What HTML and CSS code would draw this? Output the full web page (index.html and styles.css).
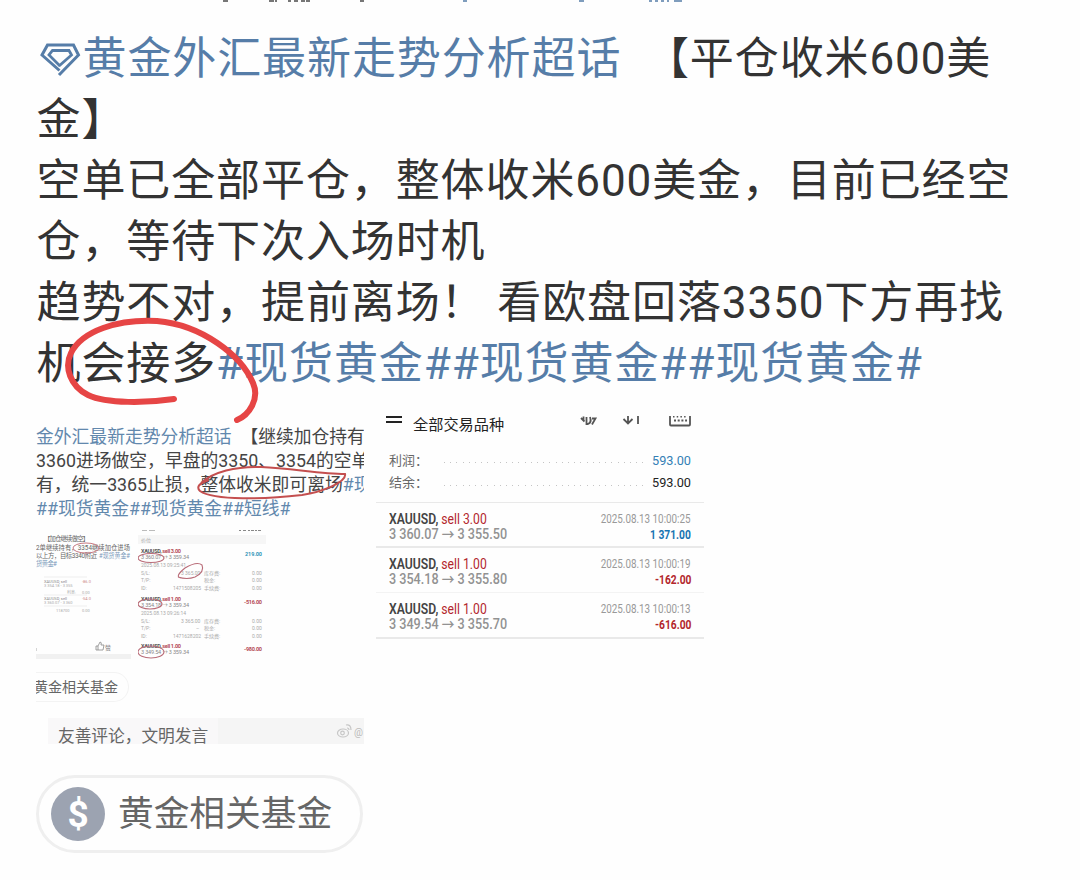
FILE: index.html
```
<!DOCTYPE html>
<html lang="zh-CN">
  <head>
    <meta charset="utf-8">
    <title>黄金外汇最新走势分析超话</title>
    <link rel="stylesheet" href="styles.css">
  </head>
  <body>
    <div class="post">
      <svg class="cut-line" width="1080" height="3" viewBox="0 0 1080 3">
        <path d="M223 1h5M269 1h5M275 1h2M288 1h3M294 1h4M301 1h4M306 1h4M360 1h4" stroke="#777" stroke-width="2"/>
        <path d="M463 1h4M579 1h5M649 1h3M655 1h3M661 1h3M667 1h2M674 1h8" stroke="#7f9dbd" stroke-width="2"/>
      </svg>
      <div class="text">
        <div><a class="topic"><svg class="gem" width="46" height="36" viewBox="0 0 46 36"><path d="M22.500 29.500L5 14L10.500 4H36.500L41.500 14L22 34" fill="none" stroke="#567da8" stroke-width="3"/><path d="M23 25L12 14L15.500 9.500H32L34.500 14L22 25" fill="none" stroke="#567da8" stroke-width="2.800"/></svg>黄金外汇最新走势分析超话</a>&nbsp; 【平仓收米600美</div>
        <div>金】</div>
        <div>空单已全部平仓，整体收米600美金，目前已经空</div>
        <div>仓，等待下次入场时机</div>
        <div>趋势不对，提前离场！ 看欧盘回落3350下方再找</div>
        <div>机会接多<a>#现货黄金##现货黄金##现货黄金#</a></div>
        <svg class="circle-mark" width="210" height="120" viewBox="0 0 210 120">
          <path d="M112 84C85 88 45 89 26 80C8 71 2 52 9 38C20 16 55 4 95 6C140 10 179 40 191 68C198 84 187 100 175 105" fill="none" stroke="#e64545" stroke-width="6" stroke-linecap="round"/>
        </svg>
      </div>

      <div class="pictures">
        <div class="picture old-post">
          <div class="old-text">
            <div><a>金外汇最新走势分析超话</a>&nbsp; 【继续加仓持有</div>
            <div>3360进场做空，早盘的3350、3354的空单</div>
            <div>有，统一3365止损，整体收米即可离场<a>#现</a></div>
            <div><a>##现货黄金##现货黄金##短线#</a></div>
            <svg class="oval-mark" width="156" height="42" viewBox="0 0 156 42">
              <path d="M5 20C17 9 40 3 65 4C95 5 124 11 149 11C151 19 126 29 106 32C70 36 18 38 4 28Q-2 22 13 17" fill="none" stroke="#c44f4f" stroke-width="2"/>
            </svg>
          </div>
          <div class="old-pictures">
            <svg class="tiny" width="95" height="130" viewBox="0 0 95 130">
              <g font-size="6.300" fill="#666">
                <text x="8" y="11" textLength="45">【加仓继续做空】</text>
                <text x="0" y="20" textLength="94">2单继续持有，3354继续加仓进场</text>
                <text x="0" y="28" textLength="61">以上方，目标3340附近</text>
                <text x="63" y="28" fill="#7898b9" textLength="31" lengthAdjust="spacingAndGlyphs">#现货黄金#</text>
                <text x="0" y="36" fill="#7898b9" textLength="21">货黄金#</text>
              </g>
              <g font-size="4" fill="#aaa">
                <text x="8" y="53" fill="#888">XAUUSD, sell</text><text x="46" y="53" fill="#c88">-86.0</text>
                <text x="8" y="57">3 354.18 - 3 355</text><text x="31" y="64">利息:</text><text x="46" y="64">0.00</text>
                <text x="8" y="70" fill="#888">XAUUSD, sell</text><text x="46" y="70" fill="#c88">-54.0</text>
                <text x="8" y="74">3 360.07 - 3 360</text><text x="20" y="82">118700</text><text x="46" y="82">0.00</text>
              </g>
              <path d="M8 47h43M8 65h43M8 76h43" stroke="#eee"/>
              <path d="M60 120v-4h2l2-4q2 0 1 3h3l-1 5h-7M62 116v4" fill="none" stroke="#888" stroke-width=".8"/>
              <text x="69" y="120" font-size="6" fill="#777">赞</text>
              <path d="M0 118v3" stroke="#aaa"/>
              <rect y="124" width="95" height="5" fill="#f1f1f1"/>
              <ellipse cx="50" cy="18" rx="13" ry="5" fill="none" stroke="#c77982"/>
            </svg>
            <svg class="tiny" width="128" height="130" viewBox="0 0 128 130">
              <rect x="0" y="5" width="128" height="9" fill="#f6f6f6"/>
              <path d="M4 .5h5M11 .5h6" stroke="#bbb"/><path d="M101 .5h2M105 .5h3M110 .5h2M113 .5h3M117 .5h2M120 .5h3" stroke="#888"/>
              <g font-size="5" fill="#aaa">
                <text x="3" y="12">价位</text>
                <text x="3" y="37" textLength="45">2025.08.13 09:25:41</text>
                <text x="3" y="45">S/L:</text><text x="43" y="45">3 365.00</text><text x="66" y="45">库存费:</text><text x="114" y="45">0.00</text>
                <text x="3" y="52">T/P:</text><text x="66" y="52">税金:</text><text x="114" y="52">0.00</text>
                <text x="3" y="60">ID:</text><text x="35" y="60">1471508205</text><text x="66" y="60">手续费:</text><text x="114" y="60">0.00</text>
                <text x="3" y="85" textLength="45">2025.08.13 09:26:14</text>
                <text x="3" y="93">S/L:</text><text x="43" y="93">3 365.00</text><text x="66" y="93">库存费:</text><text x="114" y="93">0.00</text>
                <text x="3" y="100">T/P:</text><text x="58" y="100">–</text><text x="66" y="100">税金:</text><text x="114" y="100">0.00</text>
                <text x="3" y="108">ID:</text><text x="35" y="108">1471628202</text><text x="66" y="108">手续费:</text><text x="114" y="108">0.00</text>
              </g>
              <g font-size="5.500" font-weight="700" fill="#555">
                <text x="3" y="23" textLength="40">XAUUSD, <tspan fill="#b54b56">sell 3.00</tspan></text>
                <text x="3" y="71" textLength="40">XAUUSD, <tspan fill="#b54b56">sell 1.00</tspan></text>
                <text x="3" y="118" textLength="40">XAUUSD, <tspan fill="#b54b56">sell 1.00</tspan></text>
                <text x="107" y="26" fill="#3596b9" textLength="17">219.00</text>
                <text x="106" y="74" fill="#b54b56" textLength="18">-516.00</text>
                <text x="106" y="121" fill="#b54b56" textLength="18">-980.00</text>
              </g>
              <g font-size="5.500" fill="#888">
                <text x="3" y="29" textLength="48">3 360.07 → 3 359.34</text>
                <text x="3" y="77" textLength="48">3 354.18 → 3 359.34</text>
                <text x="3" y="124" textLength="48">3 349.54 → 3 359.34</text>
              </g>
              <g fill="none" stroke="#b96c78" stroke-width="1.100">
                <ellipse cx="13" cy="28" rx="13" ry="4.500"/>
                <path d="M43 48Q36 47 47 38Q59 31 64 35Q67 42 57 47Q49 50 40 47"/>
                <ellipse cx="12" cy="74" rx="12" ry="5"/>
                <ellipse cx="13" cy="122" rx="13" ry="6"/>
              </g>
            </svg>
          </div>
          <div class="old-fund">黄金相关基金</div>
          <div class="comment-bar">
            <span class="comment-hint">友善评论，文明发言</span>
            <svg width="28" height="18" viewBox="0 0 28 18" fill="none" stroke="#c6c6c6" stroke-width="1.200">
              <ellipse cx="7" cy="11" rx="5.500" ry="4"/><circle cx="6.500" cy="11" r="1.800"/><path d="M10 3q5-1 5 5M11 6q2 0 2 2"/>
              <text x="18" y="14" font-size="10" fill="#bbb" stroke="none">@</text>
            </svg>
          </div>
        </div>

        <div class="picture trades">
          <div class="trades-head">
            <svg width="16" height="9" viewBox="0 0 16 9"><path d="M0 1h16M0 6h16" stroke="#222" stroke-width="1.800"/></svg>
            <span class="trades-title">全部交易品种</span>
            <svg width="112" height="12" viewBox="0 0 112 12" fill="none" stroke="#555" stroke-width="1.800">
              <path d="M1 2L4.500 5.500M3.500 .5V5M6.500 1V8H8Q12 6.500 10 1M12 2.500h3.500L12 8.500"/>
              <path d="M48 0V7M43.500 3L48 7.500L52.500 3M58 0V8"/>
              <path d="M90 0V8.500Q90 9.500 91 9.500H109Q110 9.500 110 8.500V0"/><path d="M94 4.500h13" stroke-dasharray="2 1.700"/><path d="M93 .5h14" stroke-dasharray="1.500 2.200"/>
            </svg>
          </div>
          <div class="sums">
            <div class="sum"><span>利润：</span><i></i><b class="blue">593.00</b></div>
            <div class="sum"><span>结余：</span><i></i><b>593.00</b></div>
          </div>
          <div class="trade">
            <div class="trade-line"><span class="pair"><b>XAUUSD,</b> sell 3.00</span><span class="date">2025.08.13 10:00:25</span></div>
            <div class="trade-line"><span class="price">3 360.07 → 3 355.50</span><span class="result win">1 371.00</span></div>
          </div>
          <div class="trade light">
            <div class="trade-line"><span class="pair"><b>XAUUSD,</b> sell 1.00</span><span class="date">2025.08.13 10:00:19</span></div>
            <div class="trade-line"><span class="price">3 354.18 → 3 355.80</span><span class="result">-162.00</span></div>
          </div>
          <div class="trade">
            <div class="trade-line"><span class="pair"><b>XAUUSD,</b> sell 1.00</span><span class="date">2025.08.13 10:00:13</span></div>
            <div class="trade-line"><span class="price">3 349.54 → 3 355.70</span><span class="result">-616.00</span></div>
          </div>
        </div>
      </div>

      <div class="fund">
        <span class="coin">$</span>
        <span>黄金相关基金</span>
      </div>
    </div>
  </body>
</html>
```
FILE: styles.css
```
body {
  margin: 0;
  background: #fefefe;
  color: #333;
  font-family: Roboto, "Noto Sans CJK SC", sans-serif;
}

.post {
  height: 880px;
  overflow: hidden;
}

.cut-line {
  display: block;
}

a {
  color: #567da8;
}

.text {
  position: relative;
  padding: 26px 0 0 36.5px;
  font-size: 44px;
  letter-spacing: 0.9px;
  line-height: 61.1px;
  white-space: nowrap;
}

.text > div {
  height: 61.1px;
}

.gem {
  vertical-align: -3px;
}

.circle-mark {
  position: absolute;
  left: 61.5px;
  top: 312px;
}

.pictures {
  display: flex;
  gap: 12px;
  padding: 20px 0 0 36px;
}

.picture {
  width: 328px;
  height: 329px;
  overflow: hidden;
}

.old-text {
  position: relative;
  padding-top: 9px;
  font-size: 17.8px;
  line-height: 24.2px;
  white-space: nowrap;
  color: #444;
}

.old-text a {
  color: #6288ad;
}

.oval-mark {
  position: absolute;
  left: 160px;
  top: 47px;
}

.old-pictures {
  display: flex;
  gap: 7px;
  padding-top: 9px;
}

.tiny {
  display: block;
}

.old-fund {
  box-sizing: border-box;
  width: 94px;
  height: 30px;
  margin: 12px 0 0 -1px;
  border: 1px solid #f3f3f3;
  border-left: none;
  border-radius: 0 15px 15px 0;
  font-size: 14px;
  line-height: 29px;
  white-space: nowrap;
  color: #666;
  text-indent: -1px;
}

.comment-bar {
  display: flex;
  align-items: center;
  justify-content: space-between;
  height: 26px;
  margin: 16px 0 0 12px;
  background: #f5f5f5;
}

.comment-hint {
  padding: 6px 10px 0;
  height: 20px;
  background: #f9f8f9;
  font-size: 16.7px;
  line-height: 25px;
  color: #666;
}

.trades-head {
  display: flex;
  align-items: flex-start;
  height: 34px;
  padding-left: 10px;
}

.trades-title {
  width: 167px;
  margin-left: 11px;
  font-size: 15.2px;
  line-height: 18px;
  color: #222;
}

.sums {
  height: 52.5px;
  border-bottom: 1px solid #e9e9e9;
}

.sum {
  display: flex;
  align-items: center;
  height: 22.5px;
  padding: 0 13px;
  line-height: 22px;
}

.sum span {
  width: 55px;
  font-size: 13px;
  color: #666;
}

.sum i {
  width: 200px;
  height: 1px;
  margin-top: 4px;
  background: repeating-linear-gradient(90deg, #c4c4c4 0 1px, transparent 1px 6.2px);
}

.sum b {
  margin-left: auto;
  font-size: 12.7px;
  font-weight: 400;
  color: #222;
}

.sum .blue {
  color: #347fb5;
}

.trade {
  box-sizing: border-box;
  height: 45.2px;
  padding: 7.5px 13px 0;
  border-bottom: 2px solid #e9e9e9;
}

.trade.light {
  border-bottom: 1px solid #f3f3f3;
}

.trade-line {
  display: flex;
  justify-content: space-between;
  height: 15.5px;
  line-height: 17px;
  white-space: nowrap;
}

/* condensed digits */
.pair,
.price {
  transform: scaleX(0.84);
  transform-origin: left;
}

.date,
.result {
  transform: scaleX(0.82);
  transform-origin: right;
}

.pair {
  font-size: 14.5px;
  color: #b3272d;
}

.pair b {
  font-weight: 600;
  color: #444;
}

.price {
  font-size: 14px;
  color: #929292;
  font-weight: 500;
  transform: scaleX(0.9);
}

.date {
  font-size: 12px;
  color: #999;
}

.result {
  font-size: 12.5px;
  font-weight: 700;
  color: #b3272d;
}

.win {
  color: #1673b1;
}

.fund {
  box-sizing: border-box;
  display: flex;
  align-items: center;
  gap: 13px;
  width: 327px;
  height: 78px;
  margin: 30px 0 0 36px;
  padding-left: 12px;
  border: 3px solid #efefef;
  border-radius: 39px;
  font-size: 35.7px;
  line-height: 50px;
  color: #666;
}

.coin {
  width: 54px;
  height: 54px;
  border-radius: 50%;
  background: #9ca3b1;
  color: #fff;
  font-size: 37px;
  font-weight: 700;
  line-height: 56px;
  text-align: center;
}
```
